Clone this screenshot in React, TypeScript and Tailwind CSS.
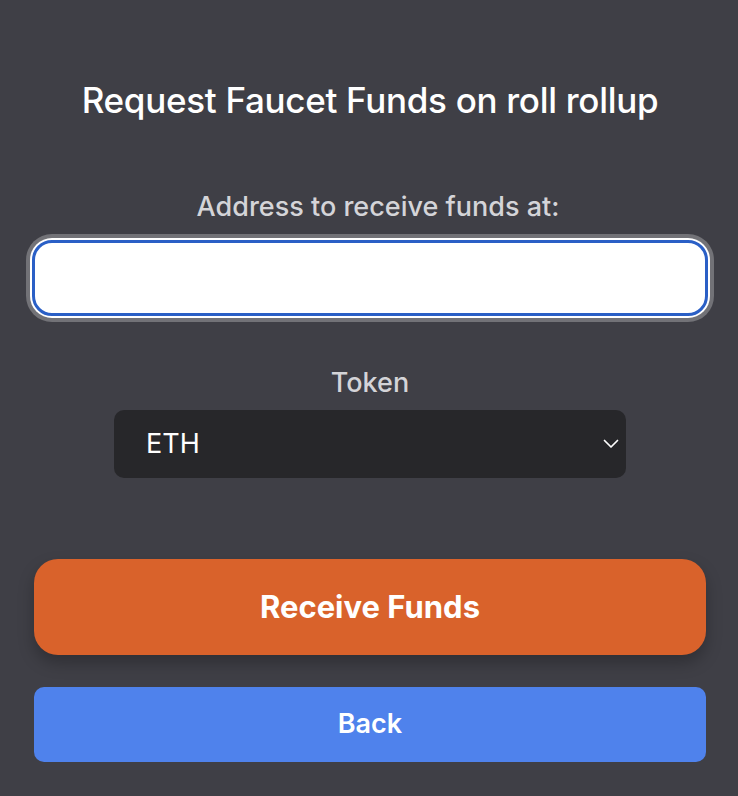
import React, { useState } from "react";

export default function App() {
    const [ address, setAddress ] = useState("");
    const [ token, setToken ] = useState("ETH");

    return (
        <div
            className="min-h-[796px] w-full bg-[#3f3f46] pl-[34px] pr-[32px] pt-[78px] text-white"
            style={{ fontFamily: "Inter, 'Noto Sans', sans-serif" }}
        >
            {/* Title */}
            <h1 className="text-center text-[35px] font-medium leading-[44px] tracking-[-0.3px]">
                Request Faucet Funds on roll rollup
            </h1>

            {/* Address */}
            <div className="mt-[67px] flex flex-col items-center">
                <label className="ml-[16px] text-[27px] font-medium leading-[36px] text-[#d4d4d8]">
                    Address to receive funds at:
                </label>
                <input
                    value={address}
                    onChange={e => setAddress(e.target.value)}
                    className="mt-[15px] h-[76px] w-[calc(100%+4px)] rounded-[20px] border-[3px] border-[#2a5fc6] bg-white px-4 text-[22px] text-black outline-none shadow-[0_0_0_2px_#ffffff,0_0_0_6px_#727277]"
                />
            </div>

            {/* Token */}
            <div className="mt-[50px] flex flex-col items-center">
                <label className="text-[27px] font-medium leading-[34px] text-[#d4d4d8]">Token</label>
                <div className="relative mt-[10px] w-[512px]">
                    <select
                        value={token}
                        onChange={e => setToken(e.target.value)}
                        className="h-[68px] w-full appearance-none rounded-[10px] bg-[#27272a] pl-[32px] text-[27px] text-white outline-none"
                    >
                        <option>ETH</option>
                    </select>
                    <svg
                        className="pointer-events-none absolute right-[7px] top-[29px]"
                        width="16"
                        height="10"
                        viewBox="0 0 16 10"
                        fill="none"
                    >
                        <path d="M1.5 1.5 L8 8 L14.5 1.5" stroke="white" strokeWidth="1.7" strokeLinecap="round" strokeLinejoin="round" />
                    </svg>
                </div>
            </div>

            {/* Buttons */}
            <button className="mt-[81px] h-[96px] w-full rounded-[24px] bg-[#d9622b] text-[31px] font-bold text-white shadow-[0_8px_16px_rgba(0,0,0,0.25)]">
                Receive Funds
            </button>
            <button className="mt-[32px] h-[75px] w-full rounded-[10px] bg-[#4f82ec] text-[27px] font-semibold text-white">
                Back
            </button>
        </div>
    );
}
